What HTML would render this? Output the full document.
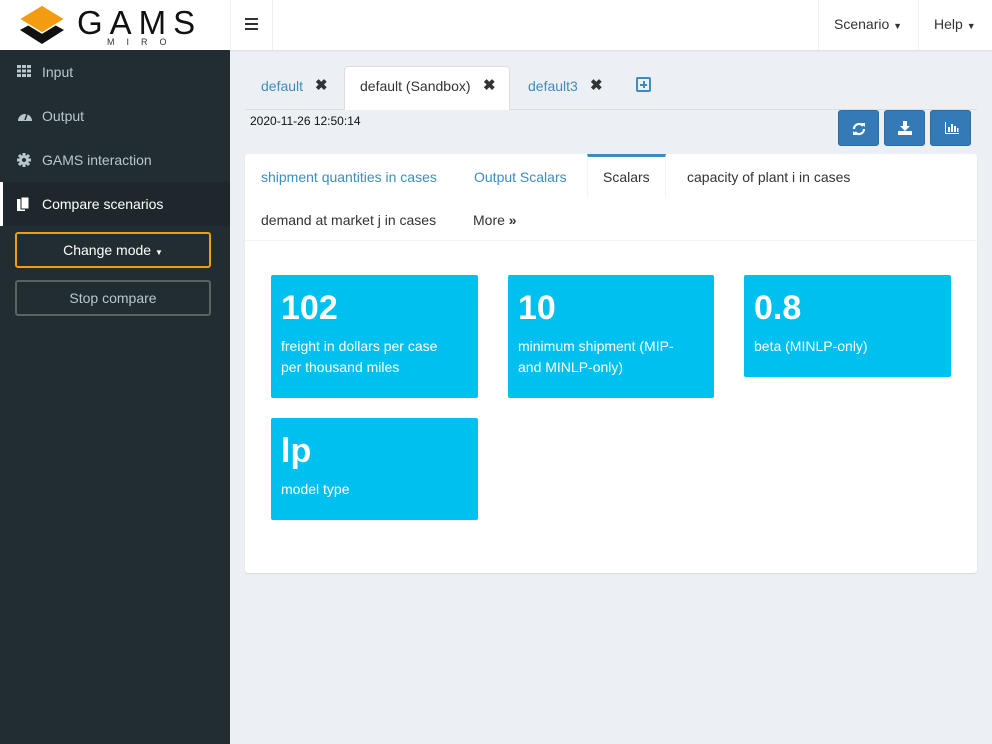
<!DOCTYPE html>
<html><head><style>
*{box-sizing:border-box;margin:0;padding:0}
body{width:992px;height:744px;overflow:hidden;font-family:"Liberation Sans",sans-serif;font-size:14px;background:#ecf0f5;position:relative;color:#333}
.hdr{position:absolute;left:0;top:0;width:992px;height:50px;background:#fff;box-shadow:0 1px 2px rgba(0,0,0,.08)}
.side{position:absolute;left:0;top:50px;width:230px;height:694px;background:#222d32}
.item{position:absolute;left:0;width:230px;height:44px;color:#b8c7ce;line-height:44px;padding-left:42px;font-size:14px}
.item svg{position:absolute;left:17px;top:15px}
.abs{position:absolute}
.btn{position:absolute;background:#337ab7;border:1px solid #2e6da4;border-radius:3px;width:41px;height:36px;top:110px}
.box{position:absolute;background:#00c0ef;color:#fff;border-radius:2px;padding:10px}
.box b{display:block;font-size:34px;font-weight:bold;line-height:42px;margin-top:2px}
.box span{display:block;font-size:14px;line-height:21px;margin-top:7px;padding-right:14px}
</style></head><body>
<div class="hdr">
  <svg class="abs" style="left:18px;top:2px" width="50" height="46" viewBox="0 0 50 46">
    <polygon points="2,28 24,16 46,28 24,42" fill="#111"/>
    <polygon points="1,17 24,3 47,17 24,31" fill="#f39c12" stroke="#fff" stroke-width="1.5"/>
  </svg>
  <div class="abs" style="left:77px;top:5px;font-size:33px;letter-spacing:7px;color:#111;line-height:36px">GAMS</div>
  <div class="abs" style="left:107px;top:37px;font-size:9px;letter-spacing:12px;color:#333">MIRO</div>
  <div class="abs" style="left:230px;top:0;width:1px;height:50px;background:#eee"></div>
  <div class="abs" style="left:272px;top:0;width:1px;height:50px;background:#eee"></div>
  <div class="abs" style="left:245px;top:18px;width:13px;height:2px;background:#333;box-shadow:0 5px 0 #333,0 10px 0 #333"></div>
  <div class="abs" style="left:818px;top:0;width:1px;height:50px;background:#eee"></div>
  <div class="abs" style="left:918px;top:0;width:1px;height:50px;background:#eee"></div>
  <div class="abs" style="left:834px;top:16px;color:#333">Scenario <span style="font-size:9px">▼</span></div>
  <div class="abs" style="left:934px;top:16px;color:#333">Help <span style="font-size:9px">▼</span></div>
</div>
<div class="side">
  <div class="item" style="top:0"><svg width="14" height="12"><g fill="#b8c7ce"><rect x="0" y="0" width="4" height="3"/><rect x="5" y="0" width="4" height="3"/><rect x="10" y="0" width="4" height="3"/><rect x="0" y="4.5" width="4" height="3"/><rect x="5" y="4.5" width="4" height="3"/><rect x="10" y="4.5" width="4" height="3"/><rect x="0" y="9" width="4" height="3"/><rect x="5" y="9" width="4" height="3"/><rect x="10" y="9" width="4" height="3"/></g></svg>Input</div>
  <div class="item" style="top:44px"><svg width="16" height="13"><path d="M1 12A7 7 0 1 1 15 12Z" fill="#b8c7ce"/><path d="M8 11L10 5" stroke="#222d32" stroke-width="1.5"/></svg>Output</div>
  <div class="item" style="top:88px"><svg width="14" height="14" viewBox="0 0 14 14"><circle cx="7" cy="7" r="5" fill="#b8c7ce"/><g stroke="#b8c7ce" stroke-width="3"><path d="M7 0V14M0 7H14M2 2L12 12M12 2L2 12"/></g><circle cx="7" cy="7" r="2" fill="#222d32"/></svg>GAMS interaction</div>
  <div class="item" style="top:132px;background:#1e282c;color:#fff;border-left:3px solid #fff;padding-left:39px"><svg width="13" height="15" style="left:14px"><rect x="0" y="2" width="8" height="12" fill="#fff"/><rect x="4" y="0" width="8" height="12" fill="#fff" stroke="#1e282c"/></svg>Compare scenarios</div>
  <div class="abs" style="left:15px;top:182px;width:196px;height:36px;border:2px solid #f39c12;border-radius:3px;color:#fff;text-align:center;line-height:32px">Change mode <span style="font-size:8px">▼</span></div>
  <div class="abs" style="left:15px;top:230px;width:196px;height:36px;border:2px solid #5a6266;border-radius:3px;color:#b8c7ce;text-align:center;line-height:32px">Stop compare</div>
</div>
<div class="abs" style="left:245px;top:109px;width:732px;height:1px;background:#ddd"></div>
<div class="abs" style="left:261px;top:78px;color:#3c8dbc">default</div>
<div class="abs" style="left:315px;top:76px;font-weight:bold;font-size:15px">✖</div>
<div class="abs" style="left:344px;top:66px;width:166px;height:44px;background:#fff;border:1px solid #ddd;border-bottom:none;border-radius:4px 4px 0 0"></div>
<div class="abs" style="left:360px;top:78px;color:#333">default (Sandbox)</div>
<div class="abs" style="left:483px;top:76px;font-weight:bold;font-size:15px">✖</div>
<div class="abs" style="left:528px;top:78px;color:#3c8dbc">default3</div>
<div class="abs" style="left:590px;top:76px;font-weight:bold;font-size:15px">✖</div>
<div class="abs" style="left:636px;top:77px;width:15px;height:15px;border:2px solid #3c8dbc;border-radius:2px"><div class="abs" style="left:2px;top:4.5px;width:7px;height:2px;background:#3c8dbc"></div><div class="abs" style="left:4.5px;top:2px;width:2px;height:7px;background:#3c8dbc"></div></div>
<div class="abs" style="left:250px;top:114px;font-size:12px;color:#111">2020-11-26 12:50:14</div>
<div class="btn" style="left:838px"><svg class="abs" style="left:13px;top:11px" width="14" height="14" viewBox="0 0 14 14"><path d="M2 7A5 5 0 0 1 11 4M12 7A5 5 0 0 1 3 10" stroke="#fff" stroke-width="2.2" fill="none"/><path d="M9 1L13 1L13 5Z" fill="#fff"/><path d="M1 9L1 13L5 13Z" fill="#fff"/></svg></div>
<div class="btn" style="left:884px"><svg class="abs" style="left:13px;top:10px" width="14" height="14"><path d="M5 0H9V5H12L7 10L2 5H5Z" fill="#fff"/><rect x="0" y="10" width="14" height="4" fill="#fff"/></svg></div>
<div class="btn" style="left:930px"><svg class="abs" style="left:14px;top:11px" width="14" height="12"><path d="M0.5 0V11.5H14" stroke="#fff" fill="none"/><g fill="#fff"><rect x="3" y="5" width="2" height="5"/><rect x="6" y="2" width="2" height="8"/><rect x="9" y="4" width="2" height="6"/><rect x="12" y="6" width="1.5" height="4"/></g></svg></div>
<div class="abs" style="left:245px;top:154px;width:732px;height:419px;background:#fff;border-radius:3px;box-shadow:0 1px 1px rgba(0,0,0,.1)"></div>
<div class="abs" style="left:587px;top:154px;width:79px;height:44px;border-top:3px solid #3c8dbc;border-left:1px solid #f4f4f4;border-right:1px solid #f4f4f4"></div>
<div class="abs" style="left:245px;top:240px;width:732px;height:1px;background:#f4f4f4"></div>
<div class="abs" style="left:261px;top:169px;color:#3c8dbc">shipment quantities in cases</div>
<div class="abs" style="left:474px;top:169px;color:#3c8dbc">Output Scalars</div>
<div class="abs" style="left:603px;top:169px;color:#333">Scalars</div>
<div class="abs" style="left:687px;top:169px;color:#333">capacity of plant i in cases</div>
<div class="abs" style="left:261px;top:212px;color:#333">demand at market j in cases</div>
<div class="abs" style="left:473px;top:212px;color:#333">More <b>»</b></div>
<div class="box" style="left:271px;top:275px;width:207px;height:123px"><b>102</b><span>freight in dollars per case per thousand miles</span></div>
<div class="box" style="left:508px;top:275px;width:206px;height:123px"><b>10</b><span>minimum shipment (MIP- and MINLP-only)</span></div>
<div class="box" style="left:744px;top:275px;width:207px;height:102px"><b>0.8</b><span>beta (MINLP-only)</span></div>
<div class="box" style="left:271px;top:418px;width:207px;height:102px"><b>lp</b><span>model type</span></div>
</body></html>
